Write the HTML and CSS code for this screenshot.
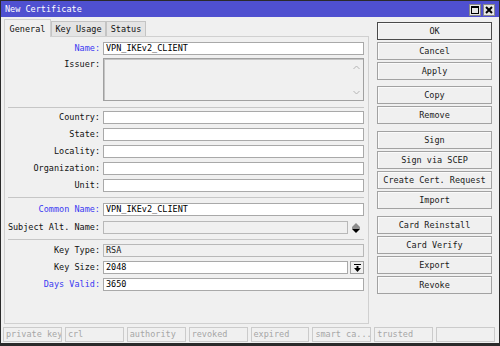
FILE: index.html
```html
<!DOCTYPE html>
<html>
<head>
<meta charset="utf-8">
<link rel="stylesheet" href="styles.css">
</head>
<body>
<div class="window">
  <div class="titlebar">
    <span class="title">New Certificate</span>
    <div class="wbtns">
      <span class="wbtn"><span class="max-icon"></span></span>
      <span class="wbtn"><svg width="8" height="8" viewBox="0 0 8 8"><path d="M1 1L7 7M7 1L1 7" stroke="#000" stroke-width="2"/></svg></span>
    </div>
  </div>
  <div class="main">
    <div class="left">
      <div class="tabs">
        <div class="tab active t-general">General</div>
        <div class="tab t-key">Key Usage</div>
        <div class="tab t-status">Status</div>
      </div>
      <div class="panel">
        <div class="row"><label class="lbl blue">Name:</label><div class="field">VPN_IKEv2_CLIENT</div></div>
        <div class="row issuer-row gap3"><label class="lbl top">Issuer:</label><div class="field issuer"><div class="scroll"><svg width="7" height="5" viewBox="0 0 7 5"><path d="M0.5 4L3.5 1L6.5 4" fill="none" stroke="#b4b4b4" stroke-width="1"/></svg><svg width="7" height="5" viewBox="0 0 7 5"><path d="M0.5 1L3.5 4L6.5 1" fill="none" stroke="#b4b4b4" stroke-width="1"/></svg></div></div></div>
        <div class="sep s1"></div>
        <div class="row gap3"><label class="lbl">Country:</label><div class="field"></div></div>
        <div class="row gap4"><label class="lbl">State:</label><div class="field"></div></div>
        <div class="row gap4"><label class="lbl">Locality:</label><div class="field"></div></div>
        <div class="row gap4"><label class="lbl">Organization:</label><div class="field"></div></div>
        <div class="row gap4"><label class="lbl">Unit:</label><div class="field"></div></div>
        <div class="sep s2"></div>
        <div class="row gap5"><label class="lbl blue">Common Name:</label><div class="field">VPN_IKEv2_CLIENT</div></div>
        <div class="row gap5"><label class="lbl">Subject Alt. Name:</label><div class="field disabled"></div><span class="updown"><svg width="8" height="10" viewBox="0 0 8 10"><path d="M0 4H8L4 0Z" fill="#8c8c8c"/><rect x="0" y="4.6" width="8" height="0.8" fill="#000"/><path d="M0 6H8L4 10Z" fill="#000"/></svg></span></div>
        <div class="sep s3"></div>
        <div class="row gap4"><label class="lbl">Key Type:</label><div class="field disabled full">RSA</div></div>
        <div class="row gap4"><label class="lbl">Key Size:</label><div class="field">2048</div><span class="dropbtn"><svg width="7" height="8" viewBox="0 0 7 8"><rect x="0" y="0" width="7" height="1" fill="#000"/><rect x="2.5" y="2" width="2" height="2" fill="#000"/><path d="M0 4H7L3.5 8Z" fill="#000"/></svg></span></div>
        <div class="row gap4"><label class="lbl blue">Days Valid:</label><div class="field">3650</div></div>
      </div>
    </div>
    <div class="buttons">
      <div class="btn default">OK</div>
      <div class="btn g2">Cancel</div>
      <div class="btn g2">Apply</div>
      <div class="btn g6">Copy</div>
      <div class="btn g2">Remove</div>
      <div class="btn g7">Sign</div>
      <div class="btn g2">Sign via SCEP</div>
      <div class="btn g2">Create Cert. Request</div>
      <div class="btn g2">Import</div>
      <div class="btn g7">Card Reinstall</div>
      <div class="btn g2">Card Verify</div>
      <div class="btn g2">Export</div>
      <div class="btn g2">Revoke</div>
    </div>
  </div>
  <div class="statusbar">
    <div class="cell">private key</div>
    <div class="cell">crl</div>
    <div class="cell">authority</div>
    <div class="cell">revoked</div>
    <div class="cell">expired</div>
    <div class="cell">smart ca...</div>
    <div class="cell">trusted</div>
    <div class="cell"></div>
  </div>
</div>
</body>
</html>
```

FILE: styles.css
```css
html, body {
  margin: 0;
  padding: 0;
  background: #f0f0f0;
}
body {
  font-family: "DejaVu Sans Mono", "Liberation Mono", monospace;
  font-size: 8.5px;
  color: #111;
}
.window {
  box-sizing: border-box;
  width: 500px;
  height: 346px;
  border: 1px solid #2a2a2a;
  border-bottom-width: 3px;
  display: flex;
  flex-direction: column;
  background: #f0f0f0;
}
.titlebar {
  height: 16px;
  flex: none;
  background: #4f50d0;
  display: flex;
  align-items: center;
  justify-content: space-between;
  padding: 0 4px 0 4px;
}
.title {
  color: #fff;
  line-height: 16px;
}
.wbtns {
  display: flex;
  gap: 2px;
  align-self: flex-start;
  margin-top: 3px;
}
.wbtn {
  box-sizing: border-box;
  width: 12px;
  height: 12px;
  background: #e6e6e6;
  border: 1px solid #8a8a8a;
  display: flex;
  align-items: center;
  justify-content: center;
}
.max-icon {
  box-sizing: border-box;
  width: 8px;
  height: 8px;
  border: 1px solid #000;
  border-top-width: 2px;
}
.main {
  box-sizing: border-box;
  height: 308px;
  flex: none;
  display: flex;
  padding: 2px 0 0 3px;
}
.left {
  width: 365px;
  display: flex;
  flex-direction: column;
}
.tabs {
  display: flex;
  align-items: flex-end;
  height: 17px;
}
.tab {
  box-sizing: border-box;
  height: 15px;
  background: #e4e4e4;
  border: 1px solid #c4c4c4;
  border-bottom: none;
  text-align: center;
  line-height: 14px;
  color: #111;
}
.tab.active {
  height: 18px;
  background: #f0f0f0;
  margin-bottom: -1px;
  position: relative;
  z-index: 1;
  line-height: 18px;
  border-color: #d0d0d0;
}
.t-general { width: 47px; }
.t-key { width: 55px; }
.t-status { width: 40px; }
.panel {
  box-sizing: border-box;
  height: 288px;
  border: 1px solid #d0d0d0;
  padding: 5px 4px 0 0;
  display: flex;
  flex-direction: column;
}
.row {
  display: flex;
  align-items: center;
  height: 13px;
}
.gap3 { margin-top: 3px; }
.gap4 { margin-top: 4px; }
.gap5 { margin-top: 5px; }
.issuer-row {
  height: 43px;
  align-items: stretch;
}
.lbl {
  width: 95px;
  margin-right: 3px;
  text-align: right;
  white-space: nowrap;
  color: #111;
  line-height: 13px;
}
.lbl.top {
  align-self: flex-start;
  line-height: 13px;
}
.lbl.blue {
  color: #3a3af2;
}
.field {
  box-sizing: border-box;
  flex: 1;
  height: 13px;
  background: #fff;
  border: 1px solid #a9a9a9;
  padding-left: 2px;
  line-height: 11px;
  color: #000;
  white-space: nowrap;
}
.field.disabled {
  background: #f0f0f0;
  border-color: #b8b8b8;
  color: #222;
}
.field.issuer {
  height: 43px;
  background: #f0f0f0;
  border: 1px solid #a0a0a0;
  box-shadow: inset 1px 1px 0 #c4c4c4;
  display: flex;
  justify-content: flex-end;
}
.scroll {
  width: 14px;
  display: flex;
  flex-direction: column;
  justify-content: space-between;
  align-items: center;
  padding: 6px 0 5px 0;
}
.sep {
  height: 0;
  border-top: 1px solid #c6c6c6;
  margin-left: 3px;
}
.s1 { margin-top: 6px; }
.s2 { margin-top: 5px; }
.s3 { margin-top: 5px; }
.updown {
  width: 16px;
  display: flex;
  justify-content: center;
  align-items: center;
}
.dropbtn {
  box-sizing: border-box;
  width: 14px;
  height: 13px;
  margin-left: 2px;
  border: 1px solid #a0a0a0;
  background: #f0f0f0;
  display: flex;
  justify-content: center;
  align-items: center;
}
.buttons {
  width: 115px;
  margin-left: 8px;
  padding-top: 3px;
  display: flex;
  flex-direction: column;
}
.btn {
  box-sizing: border-box;
  height: 18px;
  border: 1px solid #a2a2a2;
  background: #f0f0f0;
  box-shadow: inset 1px 1px 0 #fafafa;
  text-align: center;
  line-height: 16px;
  color: #1a1a1a;
  white-space: nowrap;
}
.btn.default {
  border-color: #4a4a4a;
}
.g2 { margin-top: 2px; }
.g6 { margin-top: 6px; }
.g7 { margin-top: 7px; }
.statusbar {
  display: flex;
  gap: 3px;
  height: 15px;
  margin-top: 2px;
  padding: 0 4px 0 2px;
}
.cell {
  box-sizing: border-box;
  flex: 1;
  min-width: 0;
  border: 1px solid #cbcbcb;
  color: #a6a6a6;
  padding-left: 2px;
  line-height: 13px;
  white-space: nowrap;
  overflow: hidden;
}
```
